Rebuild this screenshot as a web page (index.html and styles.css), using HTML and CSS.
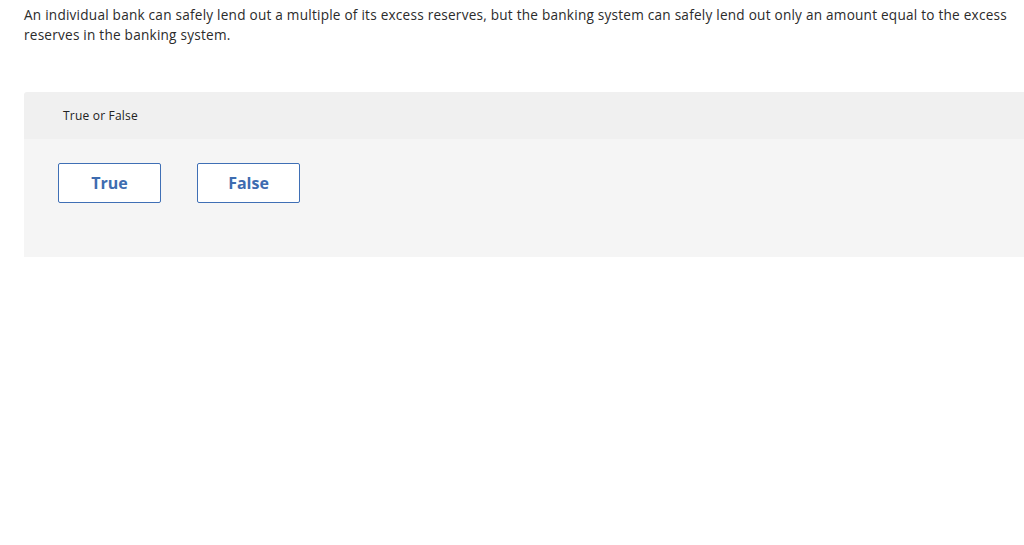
FILE: index.html
```html
<!DOCTYPE html>
<html>
<head>
<meta charset="utf-8">
<link rel="stylesheet" href="styles.css">
</head>
<body>
<div class="page">
  <p class="question">An individual bank can safely lend out a multiple of its excess reserves, but the banking system can safely lend out only an amount equal to the excess reserves in the banking system.</p>
  <div class="panel">
    <div class="panel-head">True or False</div>
    <div class="panel-body">
      <button class="choice">True</button>
      <button class="choice">False</button>
    </div>
  </div>
</div>
</body>
</html>
```
FILE: styles.css
```css
html, body {
  margin: 0;
  padding: 0;
  overflow: hidden;
  background: #fff;
}
.page {
  padding: 5px 0 0 24px;
  font-family: "Open Sans", "Liberation Sans", sans-serif;
  color: #2b2b2b;
}
.question {
  margin: 0;
  width: 995px;
  font-size: 13.6px;
  letter-spacing: 0.23px;
  line-height: 20px;
}
.panel {
  margin-top: 47px;
  width: 1010px;
  border-radius: 3px 0 0 0;
  overflow: hidden;
}
.panel-head {
  background: #f0f0f0;
  height: 47px;
  box-sizing: border-box;
  padding: 0 0 0 39px;
  display: flex;
  align-items: center;
  font-size: 12px;
  letter-spacing: 0.2px;
  color: #222;
}
.panel-body {
  background: #f5f5f5;
  height: 118px;
  box-sizing: border-box;
  padding: 24px 0 0 34px;
  display: flex;
  align-items: flex-start;
  gap: 36px;
}
.choice {
  width: 103px;
  height: 40px;
  background: #fff;
  border: 1px solid #3f6fb5;
  border-radius: 2px;
  font-family: "Open Sans", "Liberation Sans", sans-serif;
  font-weight: 700;
  font-size: 16px;
  color: #3e6cb0;
  padding: 0;
  cursor: pointer;
}
```
